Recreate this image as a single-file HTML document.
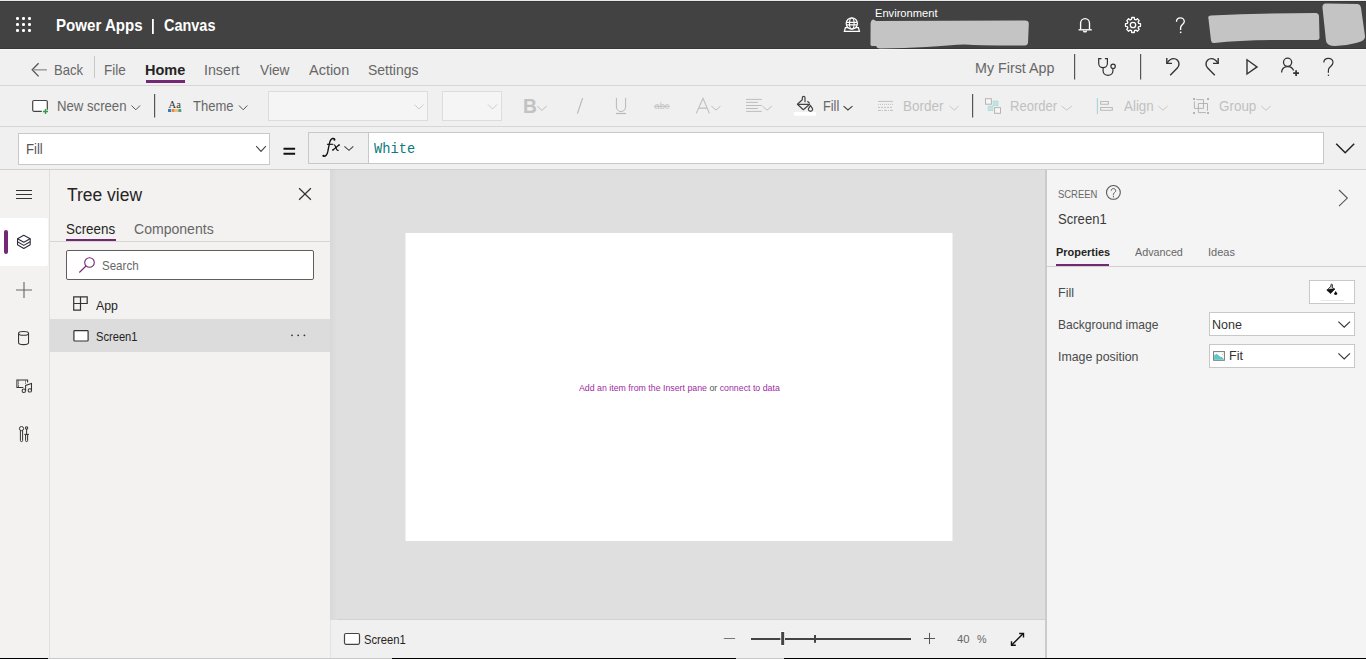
<!DOCTYPE html>
<html><head><meta charset="utf-8">
<style>
*{margin:0;padding:0;box-sizing:border-box}
html,body{width:1366px;height:659px;overflow:hidden;background:#f0f0f0;font-family:"Liberation Sans",sans-serif;color:#333;position:relative}
.a{position:absolute}
.t{position:absolute;white-space:nowrap;line-height:1;transform-origin:0 0}
svg.ov{position:absolute;left:0;top:0;width:1366px;height:659px;overflow:visible}
</style></head><body>
<!-- TOP BAR -->
<div class="a" style="left:0;top:0;width:1366px;height:1px;background:#e9e9eb"></div>
<div class="a" style="left:0;top:1px;width:1366px;height:48px;background:#424242"></div>
<div class="a" style="left:0;top:1px;width:1366px;height:1px;background:#383838"></div>
<div class="a" style="left:0;top:48px;width:1366px;height:1px;background:#383838"></div>
<!-- MENU BAR -->
<div class="a" style="left:0;top:49px;width:1366px;height:1px;background:#f9f9f9"></div>
<div class="a" style="left:0;top:85px;width:1366px;height:1px;background:#d6d6d6"></div>
<div class="a" style="left:146px;top:80px;width:39px;height:3px;background:#742774"></div>
<!-- TOOLBAR -->
<div class="a" style="left:268px;top:91px;width:160px;height:30px;background:#f5f5f5;border:1px solid #dcdcdc"></div>
<div class="a" style="left:442px;top:91px;width:60px;height:30px;background:#f5f5f5;border:1px solid #dcdcdc"></div>
<div class="a" style="left:0;top:126px;width:1366px;height:1px;background:#d6d6d6"></div>
<!-- FORMULA BAR -->
<div class="a" style="left:18px;top:133px;width:252px;height:32px;background:#fff;border:1px solid #c8c8c8"></div>
<div class="a" style="left:308px;top:132px;width:61px;height:32px;background:#f0f0f0;border:1px solid #c8c8c8"></div>
<div class="a" style="left:368px;top:132px;width:956px;height:32px;background:#fff;border:1px solid #c8c8c8"></div>
<div class="a" style="left:0;top:169px;width:1366px;height:1px;background:#d0d0d0"></div>
<!-- LEFT NAV -->
<div class="a" style="left:0;top:170px;width:49px;height:489px;background:#f3f2f1"></div>
<div class="a" style="left:49px;top:170px;width:1px;height:489px;background:#e1dfdd"></div>
<div class="a" style="left:0;top:218px;width:48px;height:48px;background:#fff;border-radius:0 2px 2px 0"></div>
<div class="a" style="left:4px;top:230px;width:4px;height:24px;background:#742774;border-radius:2px"></div>
<!-- TREE VIEW -->
<div class="a" style="left:50px;top:170px;width:280px;height:489px;background:#f3f2f1"></div>
<div class="a" style="left:50px;top:241px;width:280px;height:1px;background:#d6d6d6"></div>
<div class="a" style="left:66px;top:239px;width:50px;height:2px;background:#742774"></div>
<div class="a" style="left:66px;top:250px;width:248px;height:30px;background:#fff;border:1px solid #605e5c;border-radius:2px"></div>
<div class="a" style="left:50px;top:319px;width:280px;height:33px;background:#dcdcdc"></div>
<!-- CANVAS -->
<div class="a" style="left:330px;top:170px;width:715px;height:450px;background:#dfdfdf"></div>
<div class="a" style="left:405px;top:233px;width:548px;height:308px;background:#efefef"></div>
<div class="a" style="left:406px;top:233px;width:546px;height:308px;background:#fff"></div>
<!-- STATUS BAR -->
<div class="a" style="left:330px;top:619px;width:715px;height:1px;background:#d2d2d2"></div>
<div class="a" style="left:330px;top:620px;width:715px;height:39px;background:#f0f0f0"></div>
<!-- RIGHT PANEL -->
<div class="a" style="left:1045px;top:170px;width:2px;height:489px;background:#cbcbcb"></div>
<div class="a" style="left:1047px;top:170px;width:319px;height:489px;background:#f4f4f4"></div>
<div class="a" style="left:1047px;top:266px;width:319px;height:1px;background:#d0d0d0"></div>
<div class="a" style="left:1056px;top:264px;width:53px;height:2px;background:#742774"></div>
<div class="a" style="left:1309px;top:280px;width:46px;height:24px;background:#fff;border:1px solid #c8c8c8"></div>
<div class="a" style="left:1209px;top:312px;width:146px;height:24px;background:#fff;border:1px solid #c8c8c8"></div>
<div class="a" style="left:1209px;top:344px;width:146px;height:24px;background:#fff;border:1px solid #c8c8c8"></div>
<!-- bottom row -->
<div class="a" style="left:330px;top:170px;width:7px;height:450px;background:linear-gradient(90deg,#d8d8d8,#dfdfdf)"></div>
<div class="a" style="left:330px;top:620px;width:1px;height:39px;background:#e2e2e2"></div>
<div class="a" style="left:48px;top:658px;width:344px;height:1px;background:#c9c9c9"></div>
<div class="a" style="left:736px;top:658px;width:48px;height:1px;background:#c9c9c9"></div>
<div class="a" style="left:0;top:658px;width:48px;height:1px;background:#000"></div>
<div class="a" style="left:392px;top:658px;width:344px;height:1px;background:#000"></div>
<div class="a" style="left:784px;top:658px;width:582px;height:1px;background:#000"></div>
<svg class="ov" width="1366" height="659" viewBox="0 0 1366 659" fill="none" stroke-linecap="butt">
<!-- waffle -->
<g fill="#fff">
<rect x="16" y="17" width="3" height="3" rx="1.2"/><rect x="22" y="17" width="3" height="3" rx="1.2"/><rect x="28" y="17" width="3" height="3" rx="1.2"/>
<rect x="16" y="23" width="3" height="3" rx="1.2"/><rect x="22" y="23" width="3" height="3" rx="1.2"/><rect x="28" y="23" width="3" height="3" rx="1.2"/>
<rect x="16" y="29" width="3" height="3" rx="1.2"/><rect x="22" y="29" width="3" height="3" rx="1.2"/><rect x="28" y="29" width="3" height="3" rx="1.2"/>
</g>
<!-- pipe -->
<rect x="152" y="19" width="1.8" height="15" fill="#fff"/>
<!-- globe -->
<path d="M845.4 27.7 H858.4 L859.4 31.3 H844.4 Z" stroke="#fff" stroke-width="1.3" fill="#424242"/>
<g stroke="#fff" stroke-width="1.1">
<circle cx="851.8" cy="23.5" r="5.6" fill="#424242" stroke-width="1.25"/>
<path d="M846.6 22.4 H857 M846.6 24.9 H857"/>
<ellipse cx="851.8" cy="23.5" rx="2.3" ry="5.5"/>
</g>
<!-- blobs -->
<path d="M873.5 19.6 Q871 19.8 870.6 23.5 L870.5 44.5 Q870.6 46.2 872.6 46.1 L876 46.1 Q877 48.6 880 48.6 Q905 48.1 926 47.1 Q950 45 965 44.5 Q985 45.5 1000 45.4 L1025 45.4 Q1027.6 45.5 1028 43 L1028.8 24 Q1029 20.6 1025 20.6 L876 20.9 Z" fill="#c4c4c4"/>
<path d="M1211 15.5 Q1207.5 15.5 1208.5 19 L1211 40.5 Q1211.5 43.5 1214.5 43 Q1240 40 1280 40 L1317 40 Q1320 40 1319.5 37 L1319 16.5 Q1319 13 1315.5 13 Q1260 13 1211 15.5 Z" fill="#c4c4c4"/>
<path d="M1326 3.5 Q1322 3.5 1322.5 8 L1326 41 Q1327 46 1335 46 Q1345 46 1356 43 Q1366 41 1365 36 L1361 8 Q1360.5 4 1357 4 Z" fill="#c4c4c4"/>
<!-- bell -->
<g stroke="#fff" stroke-width="1.35">
<path d="M1080.6 29.6 V23.3 A4.45 4.7 0 0 1 1089.5 23.3 V29.6"/>
<path d="M1078.6 29.8 H1091.8"/>
<path d="M1083.5 30.4 A1.5 1.5 0 0 0 1086.5 30.4"/>
</g>
<!-- gear -->
<path d="M1138.70 23.48 L1140.49 23.71 L1140.49 26.29 L1138.70 26.52 L1138.10 27.96 L1139.21 29.39 L1137.39 31.21 L1135.96 30.10 L1134.52 30.70 L1134.29 32.49 L1131.71 32.49 L1131.48 30.70 L1130.04 30.10 L1128.61 31.21 L1126.79 29.39 L1127.90 27.96 L1127.30 26.52 L1125.51 26.29 L1125.51 23.71 L1127.30 23.48 L1127.90 22.04 L1126.79 20.61 L1128.61 18.79 L1130.04 19.90 L1131.48 19.30 L1131.71 17.51 L1134.29 17.51 L1134.52 19.30 L1135.96 19.90 L1137.39 18.79 L1139.21 20.61 L1138.10 22.04 Z" stroke="#fff" stroke-width="1.3" stroke-linejoin="round"/>
<circle cx="1133" cy="25" r="2.7" stroke="#fff" stroke-width="1.3"/>
<!-- help top -->
<path d="M1176.5 21.8 C1176.5 19.4 1178.3 17.9 1180.4 17.9 C1182.6 17.9 1184.3 19.5 1184.3 21.5 C1184.3 23.5 1182.5 24.5 1181.4 25.7 C1180.8 26.4 1180.6 27 1180.6 27.8 V29.9" stroke="#fff" stroke-width="1.35"/>
<rect x="1179.9" y="31.6" width="1.5" height="1.5" fill="#fff"/>

<!-- MENU BAR -->
<path d="M38.6 63.3 L32.2 69.8 L38.6 76.4" stroke="#555" stroke-width="1.3"/>
<path d="M33 69.8 H46.9" stroke="#a3a3a3" stroke-width="1.6"/>
<rect x="94" y="56" width="1" height="22" fill="#c8c8c8"/>
<rect x="1074" y="54" width="1.2" height="25.5" fill="#555"/>
<rect x="1140" y="54" width="1.2" height="25.5" fill="#555"/>
<!-- stethoscope -->
<g stroke="#333" stroke-width="1.2">
<path d="M1101.5 58.6 H1098.7 V63.5 A4.35 4.2 0 0 0 1107.4 63.5 V58.6 H1104.9"/>
<path d="M1103.1 67.6 V71 A4.9 4.3 0 0 0 1112.9 71 V68.6"/>
<circle cx="1113.1" cy="66.3" r="2.2"/>
</g>
<!-- undo redo -->
<g stroke="#333" stroke-width="1.4">
<path d="M1166.8 58 V63.4 H1172"/>
<path d="M1167.3 62.9 C1169 60 1171 58.6 1173.7 58.6 C1176.7 58.6 1179 61 1179 64 C1179 65.5 1178.4 66.9 1177.3 68 L1170.2 75.2"/>
<path d="M1218.2 58 V63.4 H1213"/>
<path d="M1217.7 62.9 C1216 60 1214 58.6 1211.3 58.6 C1208.3 58.6 1206 61 1206 64 C1206 65.5 1206.6 66.9 1207.7 68 L1214.8 75.2"/>
<path d="M1247 59.8 V74 L1257 66.9 Z" stroke-linejoin="miter"/>
</g>
<!-- person add -->
<g stroke="#333" stroke-width="1.3">
<circle cx="1287.6" cy="62.3" r="4.1"/>
<path d="M1281.6 72.6 A6.2 6.2 0 0 1 1293.6 70.6"/>
<path d="M1293.2 73.2 H1299 M1296.1 70.3 V76" stroke-width="1.7"/>
</g>
<!-- help menu -->
<path d="M1323.8 62.5 C1323.8 59.8 1325.9 58.3 1328.4 58.3 C1331.1 58.3 1333 60.2 1333 62.6 C1333 64.9 1331 66 1329.6 67.5 C1328.8 68.3 1328.4 69.2 1328.4 70.2 V72.8" stroke="#333" stroke-width="1.2"/>
<rect x="1327.8" y="74.6" width="1.3" height="1.3" fill="#333"/>

<!-- TOOLBAR -->
<path d="M41.8 111.3 H33.9 Q32.7 111.3 32.7 110.1 V101.7 Q32.7 100.5 33.9 100.5 H46.1 Q47.3 100.5 47.3 101.7 V109.8" stroke="#444" stroke-width="1.2" fill="#fff"/>
<path d="M43 111.5 H48 M45.5 109 V114" stroke="#2f9e44" stroke-width="1.4"/>
<path d="M131.5 105.5 L135.8 109.8 L140.1 105.5" stroke="#555" stroke-width="1"/>
<rect x="154" y="94" width="1.2" height="23.5" fill="#555"/>
<text x="168.6" y="107.8" font-family="Liberation Serif" font-size="10.5" fill="#333">Aa</text>
<rect x="168" y="109" width="3" height="3" fill="#3a78c2"/><rect x="171.6" y="109" width="3" height="3" fill="#e88a38"/><rect x="175" y="109" width="3" height="3" fill="#ecc27a"/><rect x="178.3" y="109" width="3" height="3" fill="#4f9e7e"/>
<path d="M239 105.5 L243.2 109.8 L247.4 105.5" stroke="#555" stroke-width="1"/>
<path d="M414.5 104.5 L419 109 L423.5 104.5" stroke="#ccc" stroke-width="1"/>
<path d="M488 104.5 L492.5 109 L497 104.5" stroke="#ccc" stroke-width="1"/>
<!-- B / U abc A align -->
<text x="523" y="112.8" font-family="Liberation Sans" font-weight="bold" font-size="19.3" fill="#c2c2c2">B</text>
<path d="M537.3 106.1 L541.9 110.4 L546.6 106.1" stroke="#bdbdbd" stroke-width="1"/>
<path d="M582.6 98.1 L577.4 113.7" stroke="#b5b5b5" stroke-width="1.1"/>
<path d="M616.4 97.9 V107 A4.6 4.6 0 0 0 625.6 107 V97.9" stroke="#b8b8b8" stroke-width="1"/>
<path d="M616 113.5 H626" stroke="#b8b8b8" stroke-width="1.2"/>
<text x="654.5" y="109" font-family="Liberation Sans" font-size="9.5" fill="#c4c4c4" textLength="15" lengthAdjust="spacingAndGlyphs">abc</text>
<path d="M653.8 106.3 H670" stroke="#bdbdbd" stroke-width="1"/>
<path d="M696.3 113.4 L703 98.3 L709.4 113.4 M698.7 108.1 H707.2" stroke="#bdbdbd" stroke-width="1.1"/>
<path d="M711.4 106.2 L716 110.1 L720.4 106.2" stroke="#bdbdbd" stroke-width="1"/>
<path d="M746 99.4 H761.8 M746 102.4 H757.9 M746 105.5 H761.8 M746 108.5 H757.9 M746 111.4 H761.8" stroke="#bdbdbd" stroke-width="1"/>
<path d="M762.5 106.2 L767 110.2 L771.7 106.2" stroke="#bdbdbd" stroke-width="1"/>
<!-- fill bucket -->
<g stroke="#444" stroke-width="1.2" stroke-linejoin="round">
<path d="M797.4 104.3 H809.7 L803.3 109.7 Z"/>
<path d="M797.4 104.3 L802.3 99.7 V97.8 A1.35 1.35 0 0 1 805 97.8 V102.3"/>
<path d="M807.4 101.2 L809.7 103.4"/>
<path d="M810.5 105.6 L808.5 108.6 A2.1 2.1 0 1 0 812.5 108.6 Z"/>
</g>
<rect x="794" y="112" width="22" height="3.7" fill="#fff"/>
<path d="M843.6 106.1 L847.9 109.9 L852.5 106.1" stroke="#444" stroke-width="1.2"/>
<!-- border icon -->
<path d="M878 101.4 H893" stroke="#c0c0c0" stroke-width="1"/>
<path d="M878 104.4 H893" stroke="#c0c0c0" stroke-width="1" stroke-dasharray="1 1"/>
<path d="M878 107.4 H893" stroke="#c0c0c0" stroke-width="1" stroke-dasharray="2 1"/>
<path d="M878 110.4 H893" stroke="#c0c0c0" stroke-width="1" stroke-dasharray="3 1 1 1"/>
<path d="M949.6 106 L954.2 110.2 L958.7 106" stroke="#c8c8c8" stroke-width="1"/>
<rect x="972" y="94" width="1.2" height="23.5" fill="#555"/>
<!-- reorder -->
<rect x="993.1" y="101" width="4.9" height="4.8" fill="#c2e4e2" stroke="#a8d6d3" stroke-width="0.6"/>
<rect x="988.1" y="106.1" width="4.8" height="4.6" fill="#c2e4e2" stroke="#a8d6d3" stroke-width="0.6"/>
<rect x="985.5" y="98.7" width="5.9" height="5.5" fill="#f6f6f6" stroke="#b4b4b4" stroke-width="1"/>
<rect x="994.6" y="107.6" width="5.9" height="5.7" fill="#f6f6f6" stroke="#b4b4b4" stroke-width="1"/>
<path d="M1061.6 106 L1066.7 110.2 L1071.8 106" stroke="#c8c8c8" stroke-width="1"/>
<!-- align icon -->
<path d="M1097.4 97.9 V113.9" stroke="#a5d5d2" stroke-width="1.1"/>
<rect x="1100.7" y="101.6" width="7.6" height="2.6" fill="#fafafa" stroke="#b4b4b4" stroke-width="1"/>
<rect x="1100.7" y="107.6" width="11.6" height="2.6" fill="#fafafa" stroke="#b4b4b4" stroke-width="1"/>
<path d="M1158.2 106 L1163 110.2 L1167.7 106" stroke="#c8c8c8" stroke-width="1"/>
<!-- group icon -->
<g fill="#b4b4b4"><rect x="1193" y="98" width="2" height="2"/><rect x="1207" y="98" width="2" height="2"/><rect x="1193" y="112" width="2" height="2"/><rect x="1207" y="112" width="2" height="2"/></g>
<path d="M1196.3 99.6 H1203.5 V108.4 H1194.4 V101.3" stroke="#b4b4b4" stroke-width="1"/>
<path d="M1205.9 112.6 H1198.4 V103.5 H1207.5 V110.8" stroke="#b4b4b4" stroke-width="1"/>
<path d="M1261.1 106 L1265.9 110.2 L1270.7 106" stroke="#c8c8c8" stroke-width="1"/>

<!-- FORMULA BAR -->
<path d="M256.2 146.2 L261 151.4 L265.9 146.2" stroke="#444" stroke-width="1.1"/>
<path d="M283.5 148.8 H295.1 M283.5 153.8 H295.1" stroke="#111" stroke-width="2"/>
<g stroke="#111" fill="none">
<path d="M334.8 139.4 C334.3 138.6 333.4 138.3 332.5 138.5 C330.6 139 329.9 141 329.3 144 L327.7 152 C327.1 154.6 325.9 156.5 323.6 156.3" stroke-width="1.3"/>
<path d="M326.9 144.3 H333" stroke-width="1.1"/>
<path d="M333.6 144.8 C334.6 144.6 335 145.2 335.5 146.5 L336.7 149.6 C337 150.3 337.6 150.6 338.6 150.2" stroke-width="1.15"/>
<path d="M332.6 150.3 L339.3 144.7" stroke-width="1.15"/>
</g>
<circle cx="334.4" cy="139.7" r="1.05" fill="#111"/>
<circle cx="323.4" cy="155.8" r="1.1" fill="#111"/>
<circle cx="339.1" cy="145" r="0.75" fill="#111"/>
<circle cx="332.8" cy="150.1" r="0.75" fill="#111"/>
<path d="M344.4 146.3 L349 150.3 L353.3 146.3" stroke="#444" stroke-width="1.1"/>
<path d="M1336.2 143.8 L1345.2 152.8 L1354.2 143.8" stroke="#222" stroke-width="1.5"/>

<!-- LEFT NAV -->
<path d="M16 190.5 H32 M16 194.5 H32 M16 198.5 H32" stroke="#333" stroke-width="1"/>
<g stroke="#2b2b3b" stroke-width="1.05" stroke-linejoin="round">
<path d="M17.5 238.7 L23.8 235.3 L30.2 238.7 L23.8 242.3 Z"/>
<path d="M17.5 238.7 V244.8 L23.8 248.5 L30.2 244.8 V238.7"/>
<path d="M17.5 241.8 L23.8 245.4 L30.2 241.8"/>
</g>
<path d="M16 290 H32 M24 282 V298" stroke="#666" stroke-width="1.1"/>
<g stroke="#333" stroke-width="1.05">
<ellipse cx="23.55" cy="333.4" rx="5" ry="1.9"/>
<path d="M18.55 333.4 V342.7 A5 1.9 0 0 0 28.55 342.7 V333.4"/>
</g>
<g stroke="#333" stroke-width="1.05">
<path d="M23.3 387.5 H16.9 V379.9 H27.6 V382.6"/>
<path d="M25.6 390.8 V385.4 L31.5 383.5 V390.3"/>
<circle cx="23.8" cy="390.8" r="1.7"/>
<circle cx="29.8" cy="390.4" r="1.7"/>
</g>
<g fill="#333"><rect x="18" y="380.6" width="1" height="1"/><rect x="18" y="382.6" width="1" height="1"/><rect x="18" y="384.6" width="1" height="1"/><rect x="18" y="386.3" width="1" height="1"/><rect x="25" y="380.6" width="1" height="1"/><rect x="25" y="382.6" width="1" height="1"/></g>
<g stroke="#333" stroke-width="1">
<circle cx="21.5" cy="428.6" r="2.1"/>
<path d="M20.4 430.5 V440.5 A1.1 1.1 0 0 0 22.6 440.5 V430.5"/>
<path d="M25.6 426.9 H27.6 V429.1 H25.6 Z M26.6 429.1 V434.4"/>
<path d="M24.3 434.4 H29 M25.6 434.4 V440.6 A1 1 0 0 0 27.6 440.6 V434.4"/>
</g>

<!-- TREE -->
<path d="M299.1 188.2 L310.9 199.8 M310.9 188.2 L299.1 199.8" stroke="#333" stroke-width="1.2"/>
<circle cx="89.5" cy="262.5" r="4.8" stroke="#742774" stroke-width="1.1"/>
<path d="M86 266 L79.3 272.5" stroke="#742774" stroke-width="1.1"/>
<g stroke="#333" stroke-width="1.2">
<path d="M73.7 296.8 H87.2 V303.5 H73.7 Z M80.5 296.8 V310.1 H73.7 V303.5"/>
</g>
<rect x="73.9" y="330.6" width="14.2" height="10.4" rx="0.8" fill="#fff" stroke="#333" stroke-width="1.2"/>
<g fill="#333"><circle cx="292" cy="335.3" r="0.9"/><circle cx="298.2" cy="335.3" r="0.9"/><circle cx="304.4" cy="335.3" r="0.9"/></g>

<!-- STATUS BAR -->
<rect x="344.5" y="633.5" width="15" height="10.8" rx="1.5" fill="#fff" stroke="#444" stroke-width="1.2"/>
<path d="M723.8 638.5 H735.1" stroke="#777" stroke-width="1"/>
<path d="M751 638.9 H911" stroke="#444" stroke-width="2"/>
<rect x="780.4" y="631.2" width="4.6" height="14.5" fill="#fff"/>
<rect x="781.2" y="632" width="3" height="13" fill="#444"/>
<rect x="814" y="635" width="2" height="7.8" fill="#444"/>
<path d="M923.9 638.5 H935 M929.5 632.9 V644.1" stroke="#555" stroke-width="1"/>
<g stroke="#111" stroke-width="1.4">
<path d="M1012 644.8 L1023 633.8"/>
<path d="M1019.2 633.5 H1023.5 V637.6"/>
<path d="M1011.5 641.2 V645.3 H1015.8"/>
</g>

<!-- RIGHT PANEL -->
<circle cx="1113.4" cy="192.4" r="6.9" stroke="#555" stroke-width="1.05"/>
<path d="M1111.2 190.7 C1111.2 189.3 1112.2 188.6 1113.4 188.6 C1114.7 188.6 1115.7 189.4 1115.7 190.6 C1115.7 191.8 1114.6 192.4 1114 193 C1113.6 193.4 1113.4 193.9 1113.4 194.6 V195.3" stroke="#555" stroke-width="1"/>
<rect x="1112.9" y="196.2" width="1.1" height="1.1" fill="#555"/>
<path d="M1339 190 L1347.3 198.1 L1339 206.1" stroke="#555" stroke-width="1.1"/>
<path d="M1327.2 290 L1330.9 286.2 V284.9 A0.75 0.75 0 0 1 1332.4 284.9 V287.5 L1334.6 289.1 Z" fill="#c8c8c8" stroke="#222" stroke-width="0.9" stroke-linejoin="round"/>
<path d="M1326.8 290.1 L1334.8 289 L1330.6 293.6 Z" fill="#111" stroke="#111" stroke-width="0.7" stroke-linejoin="round"/>
<path d="M1335.7 290.9 L1334.3 293.2 A1.45 1.45 0 1 0 1337.1 293.2 Z" fill="#111"/>
<path d="M1321 300.5 H1344" stroke="#e6e6e6" stroke-width="1"/>
<path d="M1338.4 321.6 L1344.2 327.2 L1350 321.6" stroke="#333" stroke-width="1.1"/>
<path d="M1338.4 353.4 L1344.2 359 L1350 353.4" stroke="#333" stroke-width="1.1"/>
<rect x="1213.6" y="351.6" width="10.8" height="8.7" fill="#fff" stroke="#777" stroke-width="1"/>
<path d="M1214.1 355.4 L1216.5 353.8 L1221 357.2 L1221.6 356.4 L1223.9 359.5 V359.8 H1214.1 Z" fill="#5cc8c8"/>
<circle cx="1222.4" cy="354.3" r="0.6" fill="#f0b050"/>
</svg>
<div class="t" style="left:55.66px;top:17.58px;font-size:15.86px;font-family:'Liberation Sans';font-weight:bold;color:#fff;transform:scaleX(0.9511)">Power Apps</div>
<div class="t" style="left:164.05px;top:17.60px;font-size:15.86px;font-family:'Liberation Sans';font-weight:bold;color:#fff;transform:scaleX(0.9117)">Canvas</div>
<div class="t" style="left:875.26px;top:7.85px;font-size:10.72px;font-family:'Liberation Sans';font-weight:normal;color:#fff;transform:scaleX(1.0387)">Environment</div>
<div class="t" style="left:54.37px;top:63.01px;font-size:14.78px;font-family:'Liberation Sans';font-weight:normal;color:#676767;transform:scaleX(0.8851)">Back</div>
<div class="t" style="left:104.48px;top:63.32px;font-size:14.78px;font-family:'Liberation Sans';font-weight:normal;color:#676767;transform:scaleX(0.9184)">File</div>
<div class="t" style="left:145.05px;top:62.67px;font-size:14.57px;font-family:'Liberation Sans';font-weight:bold;color:#252423;transform:scaleX(0.9937)">Home</div>
<div class="t" style="left:204.19px;top:63.15px;font-size:14.78px;font-family:'Liberation Sans';font-weight:normal;color:#676767;transform:scaleX(0.9630)">Insert</div>
<div class="t" style="left:259.77px;top:63.32px;font-size:14.78px;font-family:'Liberation Sans';font-weight:normal;color:#676767;transform:scaleX(0.9276)">View</div>
<div class="t" style="left:309.06px;top:63.45px;font-size:14.78px;font-family:'Liberation Sans';font-weight:normal;color:#676767;transform:scaleX(0.9798)">Action</div>
<div class="t" style="left:368.48px;top:63.32px;font-size:14.78px;font-family:'Liberation Sans';font-weight:normal;color:#676767;transform:scaleX(0.9452)">Settings</div>
<div class="t" style="left:974.79px;top:61.21px;font-size:14.78px;font-family:'Liberation Sans';font-weight:normal;color:#676767;transform:scaleX(0.9675)">My First App</div>
<div class="t" style="left:56.84px;top:99.32px;font-size:14.78px;font-family:'Liberation Sans';font-weight:normal;color:#676767;transform:scaleX(0.8913)">New screen</div>
<div class="t" style="left:192.89px;top:99.32px;font-size:14.78px;font-family:'Liberation Sans';font-weight:normal;color:#676767;transform:scaleX(0.8810)">Theme</div>
<div class="t" style="left:822.73px;top:99.32px;font-size:14.78px;font-family:'Liberation Sans';font-weight:normal;color:#676767;transform:scaleX(0.8605)">Fill</div>
<div class="t" style="left:903.15px;top:99.45px;font-size:14.78px;font-family:'Liberation Sans';font-weight:normal;color:#c0c0c0;transform:scaleX(0.9135)">Border</div>
<div class="t" style="left:1009.73px;top:99.45px;font-size:14.78px;font-family:'Liberation Sans';font-weight:normal;color:#c0c0c0;transform:scaleX(0.8831)">Reorder</div>
<div class="t" style="left:1124.12px;top:99.32px;font-size:14.78px;font-family:'Liberation Sans';font-weight:normal;color:#c0c0c0;transform:scaleX(0.9055)">Align</div>
<div class="t" style="left:1219.06px;top:99.32px;font-size:14.78px;font-family:'Liberation Sans';font-weight:normal;color:#c0c0c0;transform:scaleX(0.9100)">Group</div>
<div class="t" style="left:26.23px;top:142.45px;font-size:14.78px;font-family:'Liberation Sans';font-weight:normal;color:#555;transform:scaleX(0.8892)">Fill</div>
<div class="t" style="left:374.00px;top:141.90px;font-size:14.48px;font-family:'Liberation Mono';font-weight:normal;color:#0e7a7e;transform:scaleX(0.9468)">White</div>
<div class="t" style="left:66.59px;top:186.74px;font-size:17.54px;font-family:'Liberation Sans';font-weight:normal;color:#252423;transform:scaleX(0.9960)">Tree view</div>
<div class="t" style="left:66.35px;top:221.52px;font-size:14.93px;font-family:'Liberation Sans';font-weight:normal;color:#252423;transform:scaleX(0.8989)">Screens</div>
<div class="t" style="left:133.88px;top:221.52px;font-size:14.93px;font-family:'Liberation Sans';font-weight:normal;color:#676767;transform:scaleX(0.9418)">Components</div>
<div class="t" style="left:102.26px;top:259.29px;font-size:13.33px;font-family:'Liberation Sans';font-weight:normal;color:#676767;transform:scaleX(0.8660)">Search</div>
<div class="t" style="left:96.27px;top:298.88px;font-size:13.19px;font-family:'Liberation Sans';font-weight:normal;color:#252423;transform:scaleX(0.9351)">App</div>
<div class="t" style="left:95.95px;top:329.64px;font-size:13.19px;font-family:'Liberation Sans';font-weight:normal;color:#252423;transform:scaleX(0.8448)">Screen1</div>
<div class="t" style="left:578.54px;top:383.06px;font-size:9.86px;font-family:'Liberation Sans';font-weight:normal;color:#9e2ca3;transform:scaleX(0.8927)">Add an item from the Insert pane <span style="color:#555">or</span> connect to data</div>
<div class="t" style="left:364.12px;top:632.79px;font-size:13.62px;font-family:'Liberation Sans';font-weight:normal;color:#252423;transform:scaleX(0.8221)">Screen1</div>
<div class="t" style="left:956.72px;top:633.53px;font-size:11.30px;font-family:'Liberation Sans';font-weight:normal;color:#676767;transform:scaleX(0.9987)">40</div>
<div class="t" style="left:976.66px;top:633.53px;font-size:11.30px;font-family:'Liberation Sans';font-weight:normal;color:#676767;transform:scaleX(0.9507)">%</div>
<div class="t" style="left:1058.32px;top:189.10px;font-size:11.45px;font-family:'Liberation Sans';font-weight:normal;color:#676767;transform:scaleX(0.8251)">SCREEN</div>
<div class="t" style="left:1057.99px;top:211.91px;font-size:14.64px;font-family:'Liberation Sans';font-weight:normal;color:#3b3a39;transform:scaleX(0.8940)">Screen1</div>
<div class="t" style="left:1055.95px;top:246.73px;font-size:11.29px;font-family:'Liberation Sans';font-weight:bold;color:#252423;transform:scaleX(0.9706)">Properties</div>
<div class="t" style="left:1134.77px;top:246.83px;font-size:11.45px;font-family:'Liberation Sans';font-weight:normal;color:#676767;transform:scaleX(0.9406)">Advanced</div>
<div class="t" style="left:1208.39px;top:246.90px;font-size:11.45px;font-family:'Liberation Sans';font-weight:normal;color:#676767;transform:scaleX(0.9609)">Ideas</div>
<div class="t" style="left:1058.07px;top:287.41px;font-size:12.46px;font-family:'Liberation Sans';font-weight:normal;color:#4a4a4a;transform:scaleX(1.0082)">Fill</div>
<div class="t" style="left:1058.14px;top:319.24px;font-size:12.32px;font-family:'Liberation Sans';font-weight:normal;color:#4a4a4a;transform:scaleX(0.9774)">Background image</div>
<div class="t" style="left:1058.03px;top:350.65px;font-size:12.46px;font-family:'Liberation Sans';font-weight:normal;color:#4a4a4a;transform:scaleX(0.9926)">Image position</div>
<div class="t" style="left:1212.08px;top:319.05px;font-size:12.61px;font-family:'Liberation Sans';font-weight:normal;color:#333;transform:scaleX(0.9939)">None</div>
<div class="t" style="left:1229.07px;top:350.14px;font-size:12.32px;font-family:'Liberation Sans';font-weight:normal;color:#333;transform:scaleX(1.0192)">Fit</div>
</body></html>
